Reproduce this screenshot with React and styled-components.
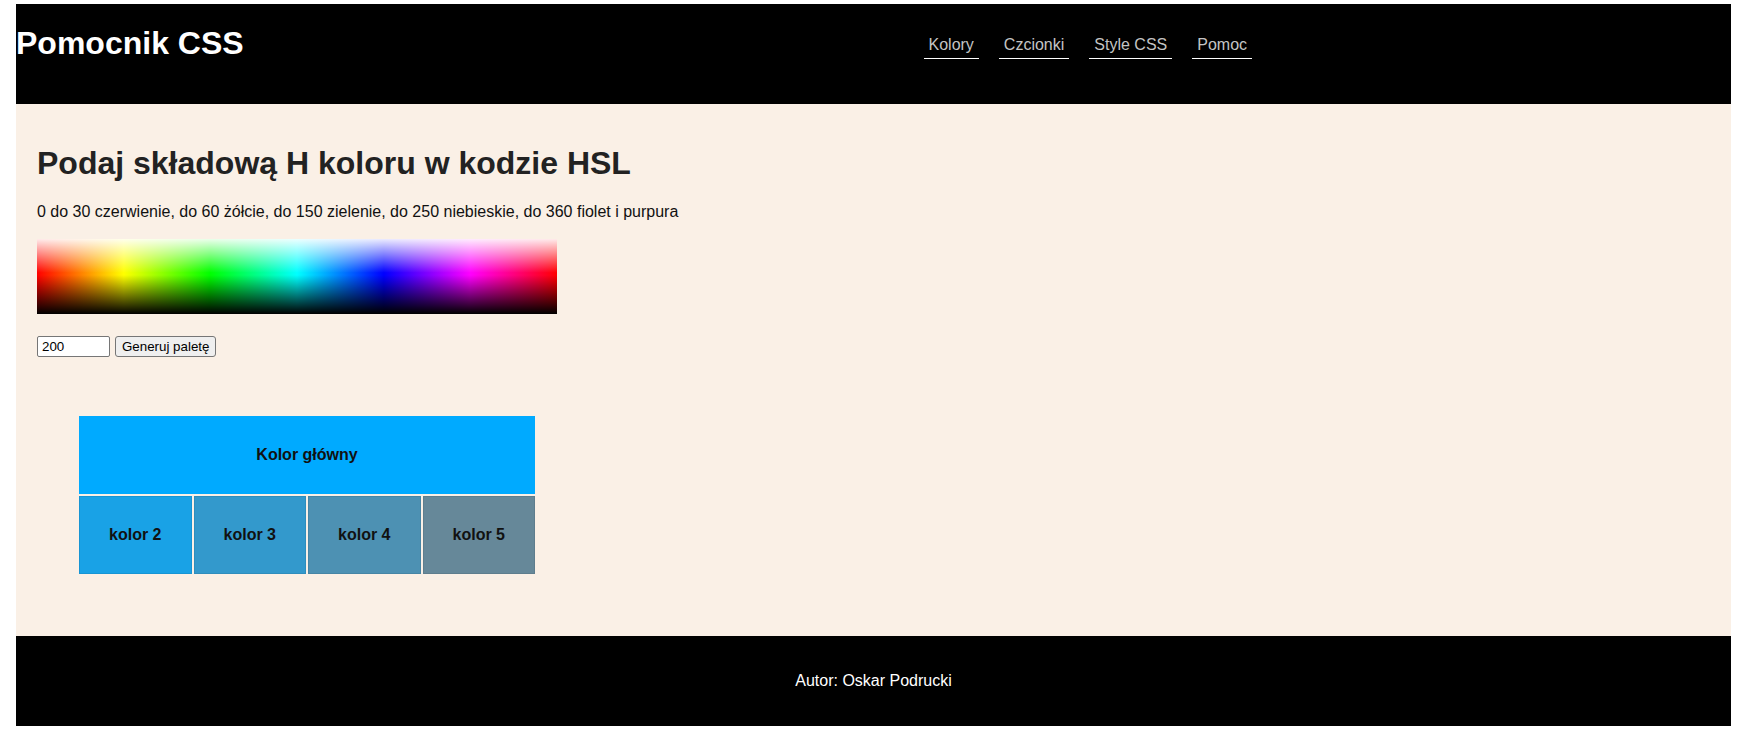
import React from "react";
import styled, { createGlobalStyle } from "styled-components";

const GlobalStyle = createGlobalStyle`
    body {
        margin: 4px 16px 0;
        font-family: "Liberation Sans", Arial, sans-serif;
        color: #222;
        background: #fff;
    }
`;

const links = ["Kolory", "Czcionki", "Style CSS", "Pomoc"];

const shades = [
    { label: "kolor 2", color: "hsl(200, 80%, 50%)" },
    { label: "kolor 3", color: "hsl(200, 60%, 50%)" },
    { label: "kolor 4", color: "hsl(200, 40%, 50%)" },
    { label: "kolor 5", color: "hsl(200, 20%, 50%)" },
];

const App = () => {
    return (
        <>
            <GlobalStyle />
            <Header>
                <Logo>Pomocnik CSS</Logo>
                <Nav>
                    {links.map((name) => (
                        <NavLink key={name} href="#">{name}</NavLink>
                    ))}
                </Nav>
            </Header>
            <Main>
                <Title>Podaj składową H koloru w kodzie HSL</Title>
                <Hint>0 do 30 czerwienie, do 60 żółcie, do 150 zielenie, do 250 niebieskie, do 360 fiolet i purpura</Hint>
                <HueStrip />
                <Form>
                    <HueInput type="text" defaultValue="200" />
                    <GenerateButton type="button">Generuj paletę</GenerateButton>
                </Form>
                <Palette>
                    <MainSwatch>Kolor główny</MainSwatch>
                    {shades.map((s) => (
                        <Swatch key={s.label} $bg={s.color}>{s.label}</Swatch>
                    ))}
                </Palette>
            </Main>
            <Footer>Autor: Oskar Podrucki</Footer>
        </>
    );
};

export default App;

// style
const Header = styled.header`
    display: flex;
    align-items: flex-start;
    height: 100px;
    background: #000;
`;

const Logo = styled.h1`
    flex: 0 0 50%;
    margin: 21px 0 0;
    font-size: 32px;
    color: #fff;
`;

const Nav = styled.nav`
    display: flex;
    gap: 20px;
    margin: 27px 0 0 50px;
`;

const NavLink = styled.a`
    padding: 5px 5px 4px;
    font-size: 16px;
    color: #c4c4c4;
    text-decoration: none;
    border-bottom: 1px solid #fff;
`;

const Main = styled.main`
    background: #faf0e6;
    padding: 20px 21px 20px;
`;

const Title = styled.h2`
    margin: 21px 0 21px;
    font-size: 32px;
    font-weight: bold;
    color: #222;
`;

const Hint = styled.p`
    margin: 0 0 18px;
    font-size: 16px;
    color: #111;
`;

const HueStrip = styled.div`
    width: 520px;
    height: 75px;
    background:
        linear-gradient(to bottom, rgba(255, 255, 255, 0.92) 0%, rgba(255, 255, 255, 0) 45%, rgba(0, 0, 0, 0) 48%, rgba(0, 0, 0, 1) 100%),
        linear-gradient(to right, #f00 0%, #ff0 16.7%, #0f0 33.3%, #0ff 50%, #00f 66.7%, #f0f 83.3%, #f00 100%);
`;

const Form = styled.div`
    display: flex;
    gap: 5px;
    margin-top: 22px;
`;

const HueInput = styled.input`
    box-sizing: border-box;
    width: 73px;
    height: 21px;
    padding: 1px 4px;
    border: 1px solid #767676;
    border-radius: 2px;
    background: #fff;
    font-family: "Liberation Sans", Arial, sans-serif;
    font-size: 13.33px;
    color: #000;
`;

const GenerateButton = styled.button`
    box-sizing: border-box;
    height: 21px;
    padding: 1px 6px;
    border: 1px solid #767676;
    border-radius: 3px;
    background: #efefef;
    font-family: "Liberation Sans", Arial, sans-serif;
    font-size: 13.33px;
    color: #000;
`;

const Palette = styled.div`
    display: grid;
    grid-template-columns: repeat(4, 1fr);
    grid-auto-rows: 78px;
    gap: 2px;
    width: 456px;
    margin: 59px 0 42px 42px;
`;

const MainSwatch = styled.div`
    grid-column: 1 / -1;
    display: flex;
    align-items: center;
    justify-content: center;
    background: #00aaff;
    font-size: 16px;
    font-weight: bold;
    color: #111;
`;

const Swatch = styled.div`
    display: flex;
    align-items: center;
    justify-content: center;
    background: ${(p) => p.$bg};
    border: 1px solid rgba(0, 0, 0, 0.08);
    font-size: 16px;
    font-weight: bold;
    color: #111;
`;

const Footer = styled.footer`
    display: flex;
    align-items: center;
    justify-content: center;
    height: 90px;
    background: #000;
    color: #fff;
    font-size: 16px;
`;
